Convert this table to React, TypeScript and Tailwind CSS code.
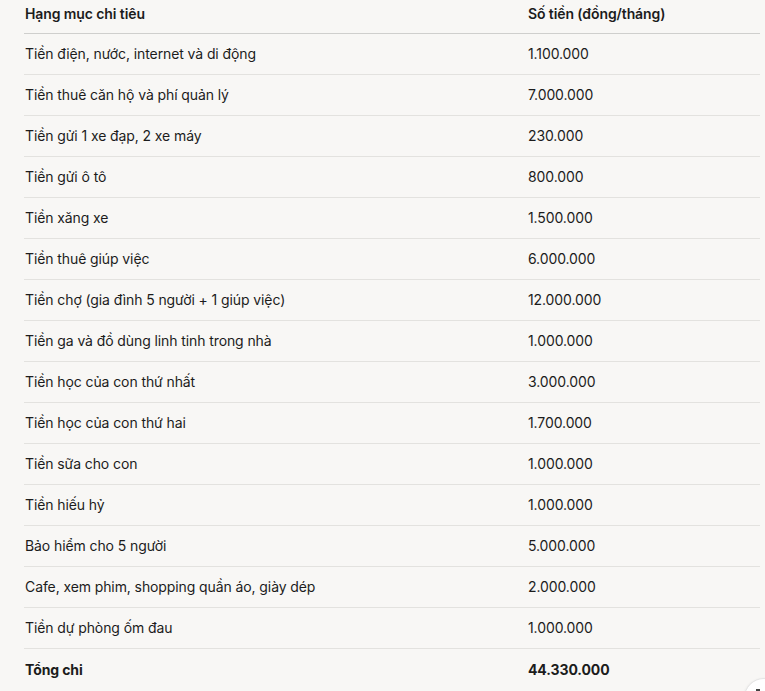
import React from "react";

const rows: [string, string][] = [
  ["Tiền điện, nước, internet và di động", "1.100.000"],
  ["Tiền thuê căn hộ và phí quản lý", "7.000.000"],
  ["Tiền gửi 1 xe đạp, 2 xe máy", "230.000"],
  ["Tiền gửi ô tô", "800.000"],
  ["Tiền xăng xe", "1.500.000"],
  ["Tiền thuê giúp việc", "6.000.000"],
  ["Tiền chợ (gia đình 5 người + 1 giúp việc)", "12.000.000"],
  ["Tiền ga và đồ dùng linh tinh trong nhà", "1.000.000"],
  ["Tiền học của con thứ nhất", "3.000.000"],
  ["Tiền học của con thứ hai", "1.700.000"],
  ["Tiền sữa cho con", "1.000.000"],
  ["Tiền hiếu hỷ", "1.000.000"],
  ["Bảo hiểm cho 5 người", "5.000.000"],
  ["Cafe, xem phim, shopping quần áo, giày dép", "2.000.000"],
  ["Tiền dự phòng ốm đau", "1.000.000"],
];

export default function App() {
  return (
    <div
      className="relative w-[765px] h-[691px] overflow-hidden bg-[#f8f7f5] text-[#1c1c1c] text-[14px] tracking-[-0.007em]"
      style={{ fontFamily: "Inter, 'Noto Sans', sans-serif" }}
    >
      <div className="ml-[24px] w-[736px]">
        <div className="flex border-b border-[#cfcfcd] pt-[4px] pb-[9px] leading-[20px] font-semibold">
          <div className="w-[504px] pl-[1px]">Hạng mục chi tiêu</div>
          <div className="flex-1">Số tiền (đồng/tháng)</div>
        </div>
        {rows.map(([a, b]) => (
          <div
            key={a}
            className="flex h-[41px] items-center border-b border-[#e3e2df] leading-[20px]"
          >
            <div className="w-[504px] pl-[1px]">{a}</div>
            <div className="flex-1">{b}</div>
          </div>
        ))}
        <div className="flex h-[41px] items-center leading-[20px] font-bold">
          <div className="w-[504px] pl-[1px]">Tổng chi</div>
          <div className="flex-1">44.330.000</div>
        </div>
      </div>
      <div className="absolute left-[744px] top-[678px] w-[40px] h-[40px] rounded-full bg-white border border-[#e5e5e5] shadow-sm flex justify-center">
        <div className="mt-[10px] ml-[-12px] w-[4px] h-[2px] bg-[#444]" />
      </div>
    </div>
  );
}
